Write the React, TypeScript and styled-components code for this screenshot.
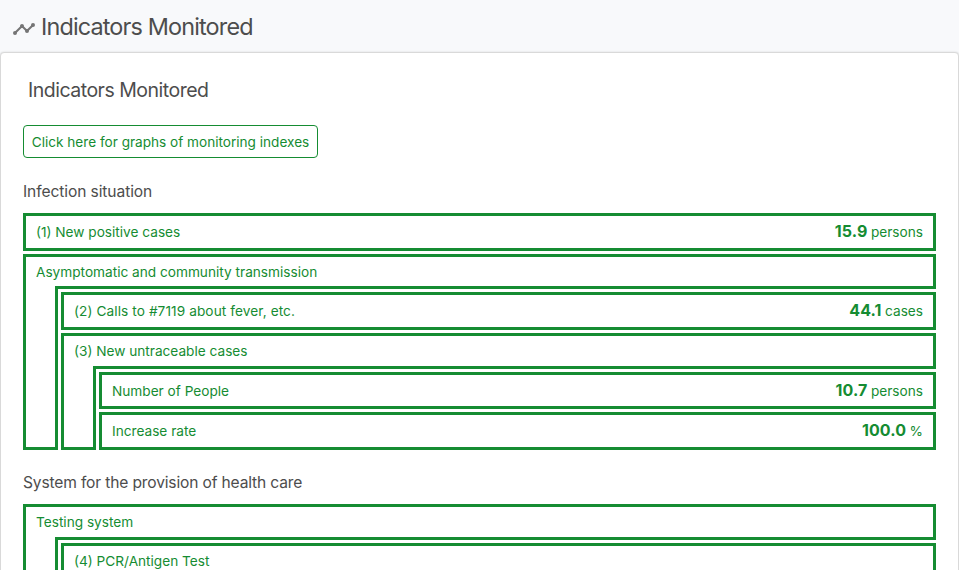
import React from 'react';
import styled, { createGlobalStyle } from 'styled-components';

const green = '#158c32';
const line = `3px solid ${green}`;

const GlobalStyle = createGlobalStyle`
  *, *::before, *::after { box-sizing: border-box; }
  html, body { margin: 0; height: 100%; overflow: hidden; background: #f8f9fb; }
  body { font-family: Inter, "Liberation Sans", sans-serif; color: #4d4d4d; }
`;

const Page = styled.main`
  height: 570px;
  overflow: hidden;
  background: #f8f9fb;
`;

const PageHeader = styled.header`
  display: flex;
  align-items: center;
  height: 52px;
  padding: 2px 12px 0;
  gap: 5px;
`;

const PageTitle = styled.h2`
  margin: 0;
  font-size: 23.4px;
  font-weight: 400;
  line-height: 36px;
  letter-spacing: -0.84px;
  white-space: nowrap;
`;

const TrendIcon = styled.svg`
  flex: none;
  width: 24px;
  height: 24px;
  margin-top: 4px;
  fill: #757575;
`;

const Card = styled.section`
  height: 620px;
  padding: 22px 22px 0;
  background: #fff;
  border: 1px solid #d9d9d9;
  border-radius: 4px;
  box-shadow: 0 0 2px rgba(0, 0, 0, 0.15);
`;

const CardTitle = styled.h3`
  margin: 0 0 20px 5px;
  font-size: 19.5px;
  font-weight: 400;
  line-height: 30px;
  letter-spacing: -0.5px;
  white-space: nowrap;
`;

const GraphLink = styled.a`
  display: flex;
  align-items: center;
  justify-content: center;
  width: 295px;
  height: 33px;
  border: 1px solid ${green};
  border-radius: 4px;
  color: ${green};
  font-size: 13.6px;
  white-space: nowrap;
`;

const SectionTitle = styled.h4<{ $first?: boolean }>`
  margin: ${(p) => (p.$first ? '22px 0 9px' : '21px 0 9px')};
  font-size: 15.6px;
  font-weight: 400;
  line-height: 24px;
  letter-spacing: ${(p) => (p.$first ? -0.1 : -0.16)}px;
`;

const Stack = styled.div`
  display: flex;
  flex-direction: column;
  gap: 3px;
`;

const Box = styled.div<{ $compact?: boolean }>`
  display: flex;
  align-items: center;
  justify-content: space-between;
  height: ${(p) => (p.$compact ? 37 : 38)}px;
  padding: 0 10px ${(p) => (p.$compact ? 1 : 2)}px;
  border: ${line};
  color: ${green};
  font-size: 13.65px;
  line-height: 20px;
`;

const GroupHead = styled.div<{ $height: number }>`
  height: ${(p) => p.$height}px;
  padding: 5px 10px 0;
  border: ${line};
  border-bottom: 0;
  color: ${green};
  font-size: 13.65px;
  line-height: 20px;
`;

const GroupBody = styled.div`
  display: grid;
  grid-template-columns: 35px 1fr;
`;

const Rail = styled.div`
  border: ${line};
  border-top: 0;
`;

const GroupItems = styled(Stack)`
  padding: 3px 0 0 3px;
  border-top: ${line};
`;

const Label = styled.span<{ $spacing?: number; $lowered?: boolean }>`
  margin-top: ${(p) => (p.$lowered ? 2 : 0)}px;
  letter-spacing: ${(p) => p.$spacing ?? 0}px;
  white-space: nowrap;
`;

const Value = styled.strong`
  font-size: 16px;
  font-weight: 700;
  letter-spacing: 0.1px;
`;

const Unit = styled.span`
  margin-left: 3.5px;
`;

type RowProps = { label: string; value?: string; unit?: string; compact?: boolean; spacing?: number };

const Row = ({ label, value, unit, compact, spacing }: RowProps) => (
  <Box $compact={compact}>
    <Label $spacing={spacing} $lowered={Boolean(value)}>
      {label}
    </Label>
    {value && (
      <span>
        <Value>{value}</Value>
        <Unit>{unit}</Unit>
      </span>
    )}
  </Box>
);

type GroupProps = { label: string; headHeight?: number; children: React.ReactNode };

const Group = ({ label, headHeight = 33, children }: GroupProps) => (
  <div>
    <GroupHead $height={headHeight}>
      <Label>{label}</Label>
    </GroupHead>
    <GroupBody>
      <Rail />
      <GroupItems>{children}</GroupItems>
    </GroupBody>
  </div>
);

export default function App() {
  return (
    <Page>
      <GlobalStyle />
      <PageHeader>
        <TrendIcon viewBox="0 0 24 24" aria-hidden="true">
          <path d="M3,14L3.5,14.07L8.07,9.5C7.89,8.85 8.06,8.11 8.59,7.59C9.37,6.8 10.63,6.8 11.41,7.59C11.94,8.11 12.11,8.85 11.93,9.5L14.5,12.07L15,12C15.18,12 15.35,12 15.5,12.07L19.07,8.5C19,8.35 19,8.18 19,8A2,2 0 0,1 21,6A2,2 0 0,1 23,8A2,2 0 0,1 21,10C20.82,10 20.65,10 20.5,9.93L16.93,13.5C17,13.65 17,13.82 17,14A2,2 0 0,1 15,16A2,2 0 0,1 13,14L13.07,13.5L10.5,10.93C10.18,11 9.82,11 9.5,10.93L4.93,15.5L5,16A2,2 0 0,1 3,18A2,2 0 0,1 1,16A2,2 0 0,1 3,14Z" />
        </TrendIcon>
        <PageTitle>Indicators Monitored</PageTitle>
      </PageHeader>
      <Card>
        <CardTitle>Indicators Monitored</CardTitle>
        <GraphLink>Click here for graphs of monitoring indexes</GraphLink>

        <SectionTitle $first>Infection situation</SectionTitle>
        <Stack>
          <Row label="(1) New positive cases" value="15.9" unit="persons" />
          <Group label="Asymptomatic and community transmission" headHeight={32}>
            <Row label="(2) Calls to #7119 about fever, etc." value="44.1" unit="cases" spacing={0.09} />
            <Group label="(3) New untraceable cases">
              <Row label="Number of People" value="10.7" unit="persons" compact />
              <Row label="Increase rate" value="100.0" unit="%" />
            </Group>
          </Group>
        </Stack>

        <SectionTitle>System for the provision of health care</SectionTitle>
        <Stack>
          <Group label="Testing system">
            <Row label="(4) PCR/Antigen Test" />
          </Group>
        </Stack>
      </Card>
    </Page>
  );
}
